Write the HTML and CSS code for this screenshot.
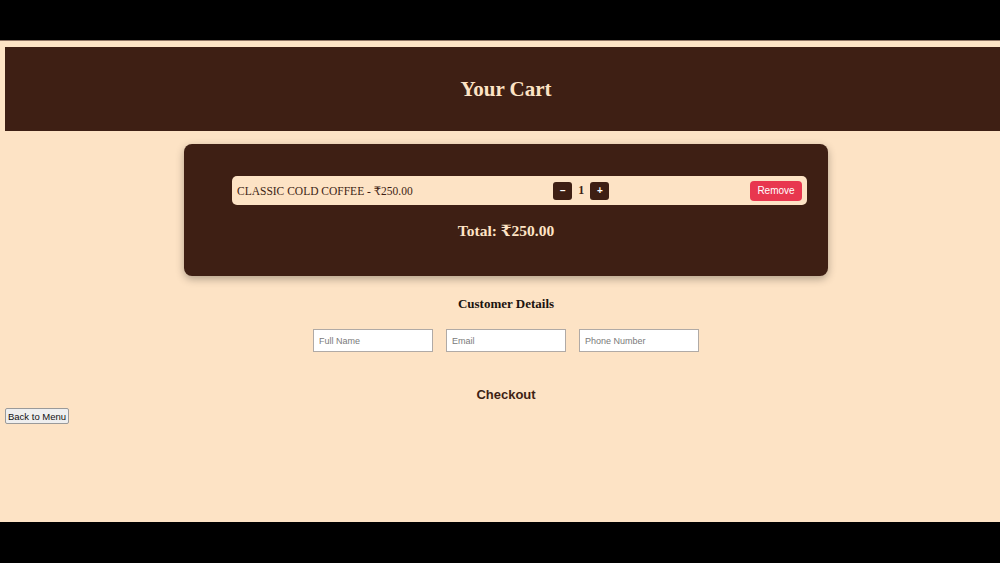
FILE: index.html
```html
<!DOCTYPE html>
<html lang="en">
<head>
    <meta charset="UTF-8">
    <meta name="viewport" content="width=device-width, initial-scale=1.0">
    <title>Your Cart</title>
    <link rel="stylesheet" href="styles.css">
</head>
<body>
    <div class="bar"></div>
    <div class="screen">
        <header class="cabecera">
            <h1>Your Cart</h1>
        </header>

        <div class="carrito">
            <ul class="lista">
                <li class="item">
                    <span class="nombre">CLASSIC COLD COFFEE - ₹250.00</span>
                    <span class="cantidad">
                        <button class="btn-cant">−</button>
                        <span class="num">1</span>
                        <button class="btn-cant">+</button>
                    </span>
                    <button class="btn-quitar">Remove</button>
                </li>
            </ul>
            <h3 class="total">Total: ₹250.00</h3>
        </div>

        <h3 class="titulo-cliente">Customer Details</h3>
        <div class="campos">
            <input type="text" placeholder="Full Name">
            <input type="email" placeholder="Email">
            <input type="tel" placeholder="Phone Number">
        </div>

        <div class="centro">
            <button class="btn-checkout">Checkout</button>
        </div>
        <button class="btn-volver">Back to Menu</button>
    </div>
    <div class="bar"></div>
</body>
</html>
```

FILE: styles.css
```css
body {
    margin: 0;
    background: #000;
    overflow: hidden;
    font-family: "Liberation Serif", "DejaVu Serif", serif;
}
.bar {
    height: 40px;
}
.screen {
    width: 1002px;
    height: 475px;
    padding: 6px 5px 0;
    background: #fde3c5;
    border-top: 1px solid #8f7464;
}
.cabecera {
    height: 84px;
    background: #3e1f14;
    display: flex;
    align-items: center;
    justify-content: center;
}
.cabecera h1 {
    margin: 0;
    color: #fde3c5;
    font-size: 21px;
    font-weight: bold;
}
.carrito {
    width: 644px;
    height: 132px;
    box-sizing: border-box;
    margin: 13px auto 0;
    padding: 32px 21px 0;
    background: #3e1f14;
    border-radius: 8px;
    box-shadow: 0 3px 8px rgba(0, 0, 0, 0.3);
}
.lista {
    list-style: none;
    margin: 0;
    padding-left: 27px;
}
.item {
    height: 29px;
    padding: 0 5px;
    background: #fde3c5;
    border-radius: 5px;
    display: flex;
    align-items: center;
    justify-content: space-between;
}
.nombre {
    color: #3e1f14;
    font-size: 11.5px;
}
.cantidad {
    display: flex;
    align-items: center;
}
.num {
    margin: 0 6px;
    color: #3e1f14;
    font-size: 12px;
    font-weight: bold;
}
.btn-cant {
    width: 19px;
    height: 18px;
    padding: 0;
    border: none;
    border-radius: 3px;
    background: #3e1f14;
    color: #fff;
    font-family: "Liberation Sans", Arial, sans-serif;
    font-size: 10px;
    font-weight: bold;
}
.btn-quitar {
    width: 52px;
    height: 20px;
    padding: 0;
    border: none;
    border-radius: 4px;
    background: #e8374f;
    color: #fff;
    font-family: "Liberation Sans", Arial, sans-serif;
    font-size: 10px;
}
.total {
    margin: 17px 0 0;
    text-align: center;
    color: #fde3c5;
    font-size: 15.5px;
    line-height: 18px;
}
.titulo-cliente {
    margin: 20px 0 0;
    text-align: center;
    color: #1c130f;
    font-size: 13px;
    line-height: 16px;
}
.campos {
    margin-top: 17px;
    display: flex;
    justify-content: center;
    gap: 13px;
}
.campos input {
    width: 120px;
    height: 23px;
    box-sizing: border-box;
    padding: 0 5px;
    border: 1px solid #b0aaa6;
    background: #fff;
    font-family: "Liberation Sans", Arial, sans-serif;
    font-size: 9px;
}
.campos input::placeholder {
    color: #7a7a7a;
}
.centro {
    margin-top: 33px;
    text-align: center;
}
.btn-checkout {
    padding: 0;
    border: none;
    background: none;
    color: #3e1f14;
    font-family: "Liberation Sans", Arial, sans-serif;
    font-size: 13px;
    line-height: 16px;
    font-weight: bold;
}
.btn-volver {
    display: block;
    margin-top: 5px;
    height: 16px;
    padding: 0 2px;
    border: 1px solid #9a9a9a;
    border-radius: 2px;
    background: #efefef;
    color: #111;
    font-family: "Liberation Sans", Arial, sans-serif;
    font-size: 9.5px;
}
```
